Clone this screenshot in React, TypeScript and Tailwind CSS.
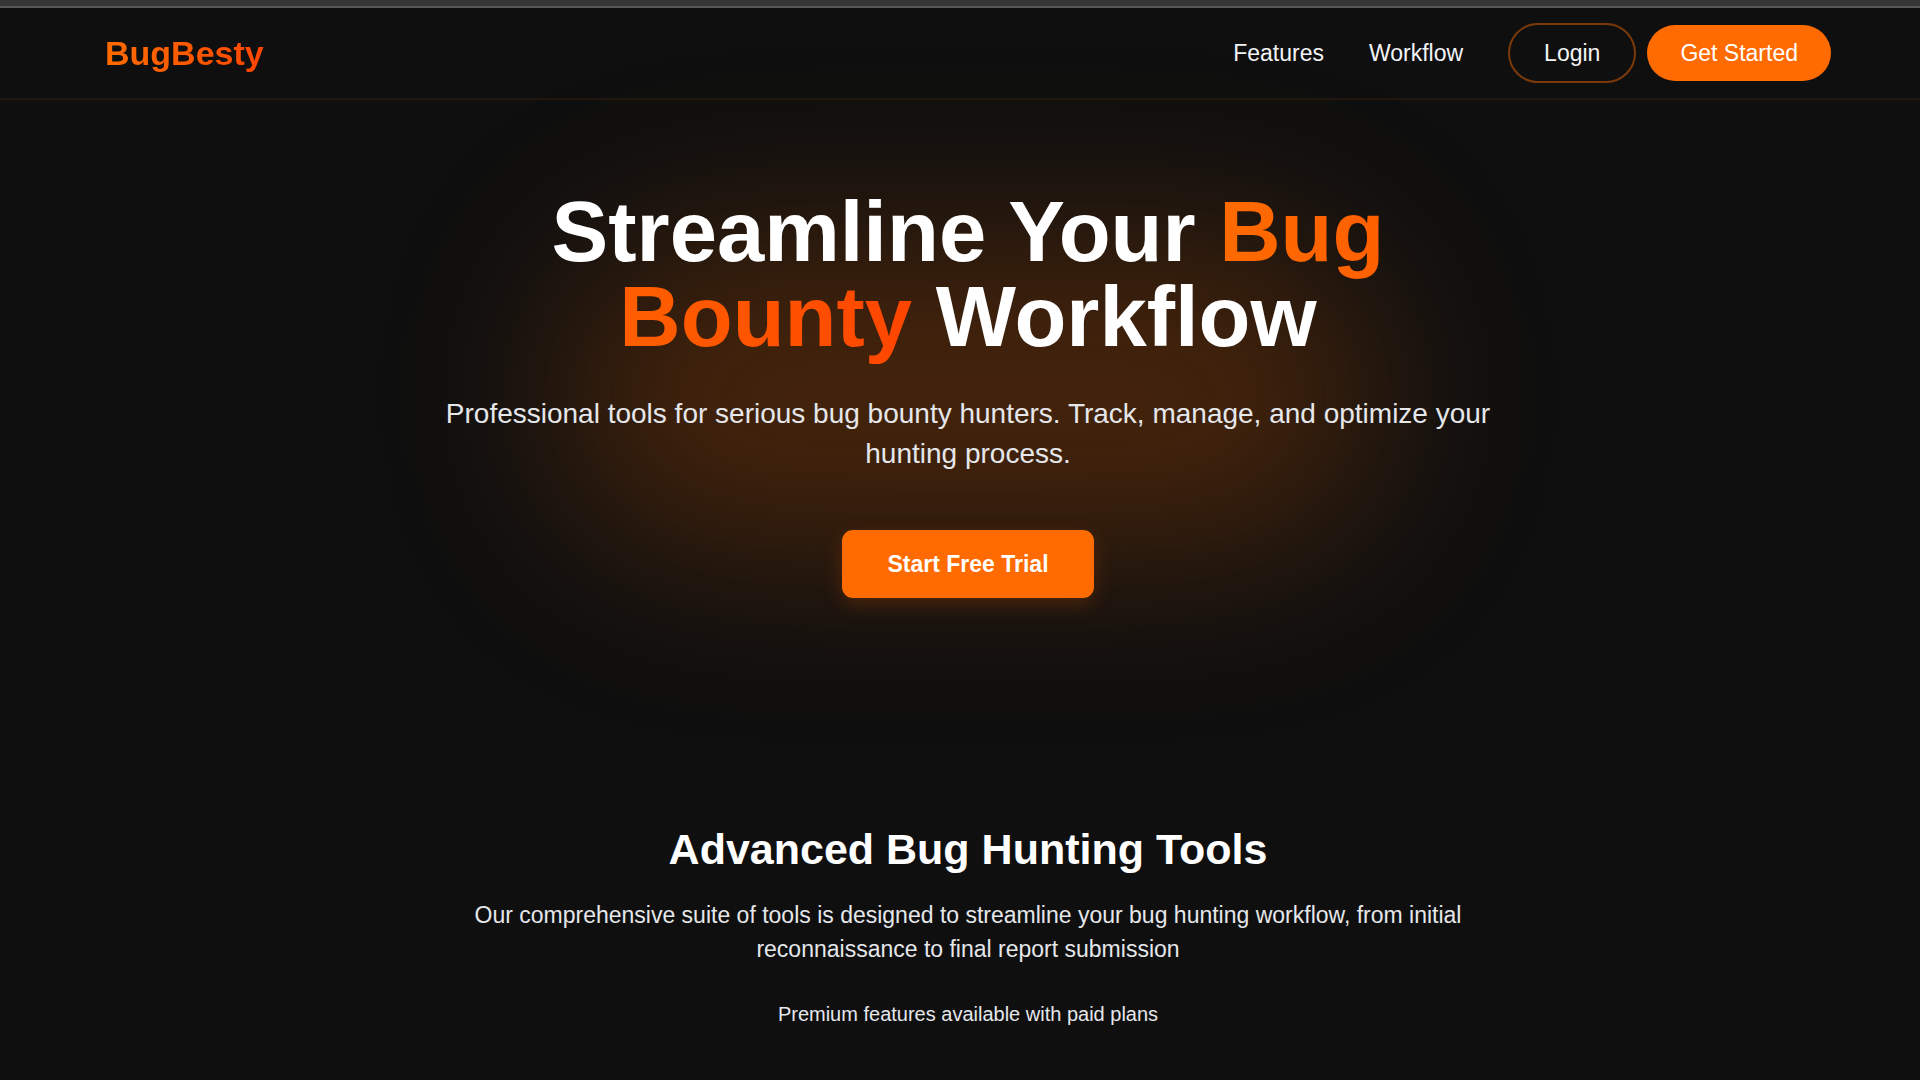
const navLinks = [
  { label: "Features", href: "#features" },
  { label: "Workflow", href: "#workflow" },
];

function Header() {
  return (
    <header className="relative z-10 border-b-2 border-[#ff6b00]/8 bg-[#0f0f0f]/80 pl-4">
      <nav className="mx-auto flex h-[90px] max-w-[1816px] items-center justify-between px-[45px]">
        <a
          href="#top"
          className="bg-linear-to-r from-[#ff6b00] to-[#ff4500] bg-clip-text text-[34px] leading-[48px] font-bold text-transparent"
        >
          BugBesty
        </a>
        <div className="flex items-center gap-[45px] text-[23px] leading-[34px] text-gray-100">
          {navLinks.map((link) => (
            <a key={link.label} href={link.href}>
              {link.label}
            </a>
          ))}
          <div className="flex items-center gap-[11px]">
            <button className="rounded-full border-2 border-[#ff6b00]/45 px-[34px] py-[11px]">Login</button>
            <button className="rounded-full bg-[#ff6b00] px-[33px] py-[11px] text-white">Get Started</button>
          </div>
        </div>
      </nav>
    </header>
  );
}

function Hero() {
  return (
    <section className="relative flex flex-col items-center pt-[89px] pb-[113px] pl-4 text-center">
      <div className="absolute top-[140px] left-1/2 ml-2 h-[310px] w-[820px] -translate-x-1/2 rounded-full bg-[#ff6b00]/23 blur-[91px]" />
      <h1 className="relative max-w-[1088px] text-[85px] leading-[85px] font-bold text-white">
        Streamline Your{" "}
        <span className="bg-linear-to-r from-[#ff6b00] to-[#ff4500] bg-clip-text text-transparent">
          Bug Bounty
        </span>{" "}
        Workflow
      </h1>
      <p className="relative mt-[35px] max-w-[1088px] text-[28px] leading-[40px] text-gray-200">
        Professional tools for serious bug bounty hunters. Track, manage, and optimize your hunting process.
      </p>
      <button className="relative mt-14 rounded-[11px] bg-[#ff6b00] px-[45px] py-[17px] text-[23px] leading-[34px] font-bold text-white shadow-[0_6px_20px_rgba(255,107,0,0.2)]">
        Start Free Trial
      </button>
    </section>
  );
}

function Tools() {
  return (
    <section
      id="features"
      className="relative flex flex-col items-center pt-[113px] pb-12 pl-4 text-center text-gray-200"
    >
      <h2 className="text-[43px] leading-[51px] font-bold text-white">Advanced Bug Hunting Tools</h2>
      <p className="mt-[23px] max-w-[1088px] text-[23px] leading-[34px]">
        Our comprehensive suite of tools is designed to streamline your bug hunting workflow, from initial
        reconnaissance to final report submission
      </p>
      <p className="mt-[34px] text-[20px] leading-[28px]">Premium features available with paid plans</p>
    </section>
  );
}

export default function App() {
  return (
    <div
      id="top"
      className="min-h-screen overflow-hidden bg-[#0f0f0f] font-['Liberation_Sans',Arial,sans-serif]"
    >
      <div className="h-2 border-b-2 border-[#585858] bg-[#353535]" />
      <Header />
      <main>
        <Hero />
        <Tools />
      </main>
    </div>
  );
}
